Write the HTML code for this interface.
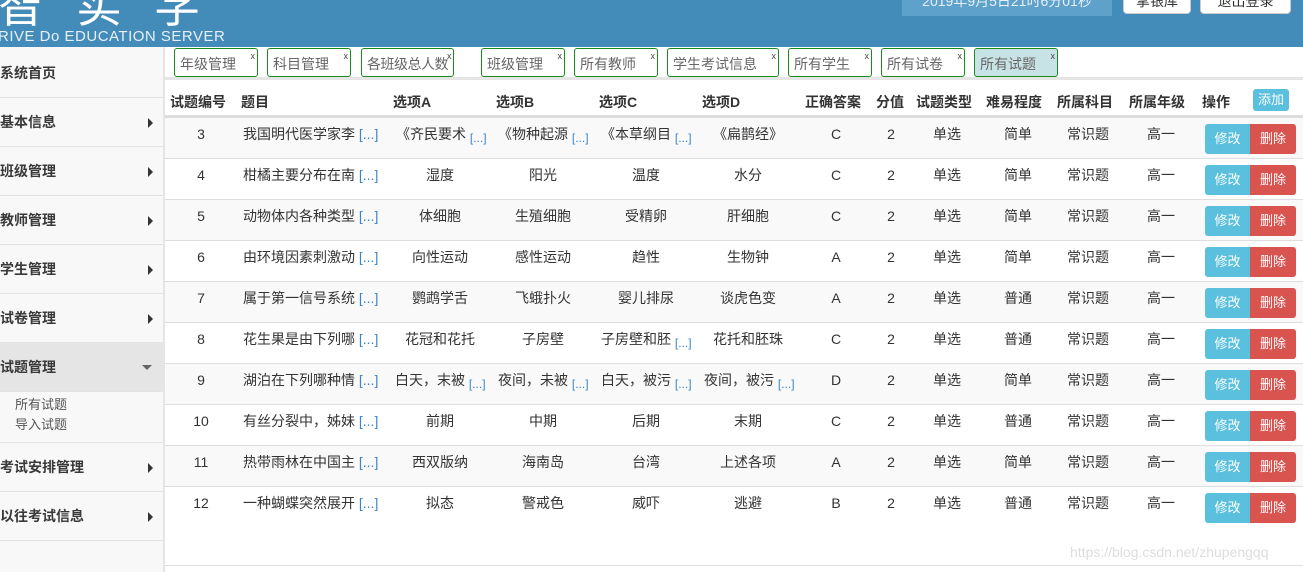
<!DOCTYPE html><html><head><meta charset="utf-8"><style>
*{margin:0;padding:0;box-sizing:border-box}
body{width:1303px;height:572px;overflow:hidden;background:#fff;font-family:"Liberation Sans","Noto Sans CJK SC",sans-serif;font-size:14px;color:#333;position:relative}
.hd{position:absolute;left:0;top:0;width:1303px;height:47px;background:#438bb9;overflow:hidden}
.logo{position:absolute;left:-2px;top:-30px;color:#fff;font-size:46px;letter-spacing:32px;font-family:"WenQuanYi Zen Hei",sans-serif}
.sub{position:absolute;left:-2px;top:28px;color:#e8f0f6;font-size:15px;letter-spacing:0.5px}
.date{position:absolute;left:902px;top:-6px;width:210px;height:22px;background:#5ea2cc;color:#e8f0f8;text-align:center;font-size:14px;line-height:14px}
.hb{position:absolute;top:-6px;height:20px;background:#fff;border:1px solid #ccc;border-radius:4px;font-size:14px;text-align:center;line-height:12px}
.side{position:absolute;left:0;top:47px;width:165px;height:525px;background:#f8f8f8;border-right:2px solid #e5e5e5;z-index:2}
.si{position:absolute;left:0;width:163px;height:49px;border-bottom:1px solid #e2e2e2;font-weight:bold;font-size:14px;line-height:49px;color:#393939}
.si i{position:absolute;right:10px;top:20px;width:0;height:0;border-top:5px solid transparent;border-bottom:5px solid transparent;border-left:5px solid #333}
.si.on{background:#e5e5e5}
.si.on i{border-left:5px solid transparent;border-right:5px solid transparent;border-top:5px solid #666;border-bottom:0;top:22px;right:11px}
.sm{position:absolute;left:15px;font-size:13px;color:#555}
.tab{position:absolute;top:48px;height:29px;border:1px solid #1a8a1a;border-radius:3px;font-size:14px;color:#666;padding:5px 0 0 5px;background:#fff;white-space:nowrap}
.tab b{position:absolute;right:2px;top:2px;font-size:9px;font-weight:normal;color:#444}
.tabline{position:absolute;left:165px;top:77px;width:1138px;height:3px;background:#e5e5e5}
.th{position:absolute;top:92px;font-weight:bold;font-size:14px;color:#333}
.hline{position:absolute;left:165px;top:115px;width:1138px;height:2px;background:#ddd}
.r{position:absolute;left:0;width:1303px;height:41px;border-top:1px solid #ddd}
.r.s{background:#f9f9f9}
.r div{position:absolute;top:7px;line-height:18px;white-space:nowrap}
.c{text-align:center}
.d{color:#3a85c6}
.sd{color:#3a85c6;font-size:12px;position:relative;top:3px}
.bt{position:absolute;top:6px;height:30px;color:#fff;font-size:13px;line-height:30px;text-align:center}
.bi{left:1205px;width:45px;background:#5bc0de;border-radius:3px 0 0 3px}
.bd{left:1250px;width:46px;background:#d9534f;border-radius:0 3px 3px 0}
.add{position:absolute;left:1253px;top:89px;width:36px;height:22px;background:#5bc0de;color:#fff;font-size:13px;line-height:22px;text-align:center;border-radius:3px}
.wm{position:absolute;left:1070px;top:544px;color:#ddd;font-size:14px}
.bl{position:absolute;left:165px;top:565px;width:1138px;height:1px;background:#ddd}
</style></head><body>
<div class="hd"><div class="logo">智实学</div><div class="sub">RIVE Do EDUCATION SERVER</div>
<div class="date">2019年9月5日21时6分01秒</div>
<div class="hb" style="left:1123px;width:68px">掌银库</div>
<div class="hb" style="left:1200px;width:91px">退出登录</div></div>
<div class="side">
<div class="si" style="top:2px">系统首页</div>
<div class="si" style="top:51px">基本信息<i></i></div>
<div class="si" style="top:100px">班级管理<i></i></div>
<div class="si" style="top:149px">教师管理<i></i></div>
<div class="si" style="top:198px">学生管理<i></i></div>
<div class="si" style="top:247px">试卷管理<i></i></div>
<div class="si on" style="top:296px">试题管理<i></i></div>
<div class="sm" style="top:347px">所有试题</div>
<div class="sm" style="top:367px">导入试题</div>
<div class="si" style="top:395px;border-top:1px solid #e2e2e2;height:50px">考试安排管理<i></i></div>
<div class="si" style="top:445px">以往考试信息<i></i></div>
</div>
<div class="tab" style="left:174px;width:84px">年级管理<b>x</b></div>
<div class="tab" style="left:267px;width:84px">科目管理<b>x</b></div>
<div class="tab" style="left:361px;width:93px;letter-spacing:-0.5px">各班级总人数<b>x</b></div>
<div class="tab" style="left:481px;width:84px">班级管理<b>x</b></div>
<div class="tab" style="left:574px;width:84px">所有教师<b>x</b></div>
<div class="tab" style="left:667px;width:112px">学生考试信息<b>x</b></div>
<div class="tab" style="left:788px;width:84px">所有学生<b>x</b></div>
<div class="tab" style="left:881px;width:84px">所有试卷<b>x</b></div>
<div class="tab" style="left:974px;width:84px;background:#c8e3e6">所有试题<b>x</b></div>
<div class="tabline"></div>
<div class="th" style="left:170px">试题编号</div><div class="th" style="left:241px">题目</div>
<div class="th" style="left:393px">选项A</div><div class="th" style="left:496px">选项B</div>
<div class="th" style="left:599px">选项C</div><div class="th" style="left:702px">选项D</div>
<div class="th" style="left:805px">正确答案</div><div class="th" style="left:876px">分值</div>
<div class="th" style="left:916px">试题类型</div><div class="th" style="left:986px">难易程度</div>
<div class="th" style="left:1057px">所属科目</div><div class="th" style="left:1129px">所属年级</div>
<div class="th" style="left:1202px">操作</div><div class="add">添加</div>
<div class="hline"></div>

<div class="r s" style="top:117px"><div class="c" style="left:171px;width:60px">3</div><div style="left:243px">我国明代医学家李 <span class="d">[...]</span></div><div style="left:396px">《齐民要术 <span class="sd">[...]</span></div><div style="left:498px">《物种起源 <span class="sd">[...]</span></div><div style="left:601px">《本草纲目 <span class="sd">[...]</span></div><div class="c" style="left:688px;width:120px">《扁鹊经》</div><div class="c" style="left:816px;width:40px">C</div><div class="c" style="left:871px;width:40px">2</div><div class="c" style="left:917px;width:60px">单选</div><div class="c" style="left:988px;width:60px">简单</div><div class="c" style="left:1053px;width:70px">常识题</div><div class="c" style="left:1131px;width:60px">高一</div><span class="bt bi">修改</span><span class="bt bd">删除</span></div>

<div class="r" style="top:158px"><div class="c" style="left:171px;width:60px">4</div><div style="left:243px">柑橘主要分布在南 <span class="d">[...]</span></div><div class="c" style="left:380px;width:120px">湿度</div><div class="c" style="left:483px;width:120px">阳光</div><div class="c" style="left:586px;width:120px">温度</div><div class="c" style="left:688px;width:120px">水分</div><div class="c" style="left:816px;width:40px">C</div><div class="c" style="left:871px;width:40px">2</div><div class="c" style="left:917px;width:60px">单选</div><div class="c" style="left:988px;width:60px">简单</div><div class="c" style="left:1053px;width:70px">常识题</div><div class="c" style="left:1131px;width:60px">高一</div><span class="bt bi">修改</span><span class="bt bd">删除</span></div>

<div class="r s" style="top:199px"><div class="c" style="left:171px;width:60px">5</div><div style="left:243px">动物体内各种类型 <span class="d">[...]</span></div><div class="c" style="left:380px;width:120px">体细胞</div><div class="c" style="left:483px;width:120px">生殖细胞</div><div class="c" style="left:586px;width:120px">受精卵</div><div class="c" style="left:688px;width:120px">肝细胞</div><div class="c" style="left:816px;width:40px">C</div><div class="c" style="left:871px;width:40px">2</div><div class="c" style="left:917px;width:60px">单选</div><div class="c" style="left:988px;width:60px">简单</div><div class="c" style="left:1053px;width:70px">常识题</div><div class="c" style="left:1131px;width:60px">高一</div><span class="bt bi">修改</span><span class="bt bd">删除</span></div>

<div class="r" style="top:240px"><div class="c" style="left:171px;width:60px">6</div><div style="left:243px">由环境因素刺激动 <span class="d">[...]</span></div><div class="c" style="left:380px;width:120px">向性运动</div><div class="c" style="left:483px;width:120px">感性运动</div><div class="c" style="left:586px;width:120px">趋性</div><div class="c" style="left:688px;width:120px">生物钟</div><div class="c" style="left:816px;width:40px">A</div><div class="c" style="left:871px;width:40px">2</div><div class="c" style="left:917px;width:60px">单选</div><div class="c" style="left:988px;width:60px">简单</div><div class="c" style="left:1053px;width:70px">常识题</div><div class="c" style="left:1131px;width:60px">高一</div><span class="bt bi">修改</span><span class="bt bd">删除</span></div>

<div class="r s" style="top:281px"><div class="c" style="left:171px;width:60px">7</div><div style="left:243px">属于第一信号系统 <span class="d">[...]</span></div><div class="c" style="left:380px;width:120px">鹦鹉学舌</div><div class="c" style="left:483px;width:120px">飞蛾扑火</div><div class="c" style="left:586px;width:120px">婴儿排尿</div><div class="c" style="left:688px;width:120px">谈虎色变</div><div class="c" style="left:816px;width:40px">A</div><div class="c" style="left:871px;width:40px">2</div><div class="c" style="left:917px;width:60px">单选</div><div class="c" style="left:988px;width:60px">普通</div><div class="c" style="left:1053px;width:70px">常识题</div><div class="c" style="left:1131px;width:60px">高一</div><span class="bt bi">修改</span><span class="bt bd">删除</span></div>

<div class="r" style="top:322px"><div class="c" style="left:171px;width:60px">8</div><div style="left:243px">花生果是由下列哪 <span class="d">[...]</span></div><div class="c" style="left:380px;width:120px">花冠和花托</div><div class="c" style="left:483px;width:120px">子房壁</div><div style="left:601px">子房壁和胚 <span class="sd">[...]</span></div><div class="c" style="left:688px;width:120px">花托和胚珠</div><div class="c" style="left:816px;width:40px">C</div><div class="c" style="left:871px;width:40px">2</div><div class="c" style="left:917px;width:60px">单选</div><div class="c" style="left:988px;width:60px">普通</div><div class="c" style="left:1053px;width:70px">常识题</div><div class="c" style="left:1131px;width:60px">高一</div><span class="bt bi">修改</span><span class="bt bd">删除</span></div>

<div class="r s" style="top:363px"><div class="c" style="left:171px;width:60px">9</div><div style="left:243px">湖泊在下列哪种情 <span class="d">[...]</span></div><div style="left:395px">白天，末被 <span class="sd">[...]</span></div><div style="left:498px">夜间，未被 <span class="sd">[...]</span></div><div style="left:601px">白天，被污 <span class="sd">[...]</span></div><div style="left:704px">夜间，被污 <span class="sd">[...]</span></div><div class="c" style="left:816px;width:40px">D</div><div class="c" style="left:871px;width:40px">2</div><div class="c" style="left:917px;width:60px">单选</div><div class="c" style="left:988px;width:60px">简单</div><div class="c" style="left:1053px;width:70px">常识题</div><div class="c" style="left:1131px;width:60px">高一</div><span class="bt bi">修改</span><span class="bt bd">删除</span></div>

<div class="r" style="top:404px"><div class="c" style="left:171px;width:60px">10</div><div style="left:243px">有丝分裂中，姊妹 <span class="d">[...]</span></div><div class="c" style="left:380px;width:120px">前期</div><div class="c" style="left:483px;width:120px">中期</div><div class="c" style="left:586px;width:120px">后期</div><div class="c" style="left:688px;width:120px">末期</div><div class="c" style="left:816px;width:40px">C</div><div class="c" style="left:871px;width:40px">2</div><div class="c" style="left:917px;width:60px">单选</div><div class="c" style="left:988px;width:60px">普通</div><div class="c" style="left:1053px;width:70px">常识题</div><div class="c" style="left:1131px;width:60px">高一</div><span class="bt bi">修改</span><span class="bt bd">删除</span></div>

<div class="r s" style="top:445px"><div class="c" style="left:171px;width:60px">11</div><div style="left:243px">热带雨林在中国主 <span class="d">[...]</span></div><div class="c" style="left:380px;width:120px">西双版纳</div><div class="c" style="left:483px;width:120px">海南岛</div><div class="c" style="left:586px;width:120px">台湾</div><div class="c" style="left:688px;width:120px">上述各项</div><div class="c" style="left:816px;width:40px">A</div><div class="c" style="left:871px;width:40px">2</div><div class="c" style="left:917px;width:60px">单选</div><div class="c" style="left:988px;width:60px">简单</div><div class="c" style="left:1053px;width:70px">常识题</div><div class="c" style="left:1131px;width:60px">高一</div><span class="bt bi">修改</span><span class="bt bd">删除</span></div>

<div class="r" style="top:486px"><div class="c" style="left:171px;width:60px">12</div><div style="left:243px">一种蝴蝶突然展开 <span class="d">[...]</span></div><div class="c" style="left:380px;width:120px">拟态</div><div class="c" style="left:483px;width:120px">警戒色</div><div class="c" style="left:586px;width:120px">威吓</div><div class="c" style="left:688px;width:120px">逃避</div><div class="c" style="left:816px;width:40px">B</div><div class="c" style="left:871px;width:40px">2</div><div class="c" style="left:917px;width:60px">单选</div><div class="c" style="left:988px;width:60px">普通</div><div class="c" style="left:1053px;width:70px">常识题</div><div class="c" style="left:1131px;width:60px">高一</div><span class="bt bi">修改</span><span class="bt bd">删除</span></div>

<div class="wm">https://blog.csdn.net/zhupengqq</div>
<div class="bl"></div>
</body></html>
